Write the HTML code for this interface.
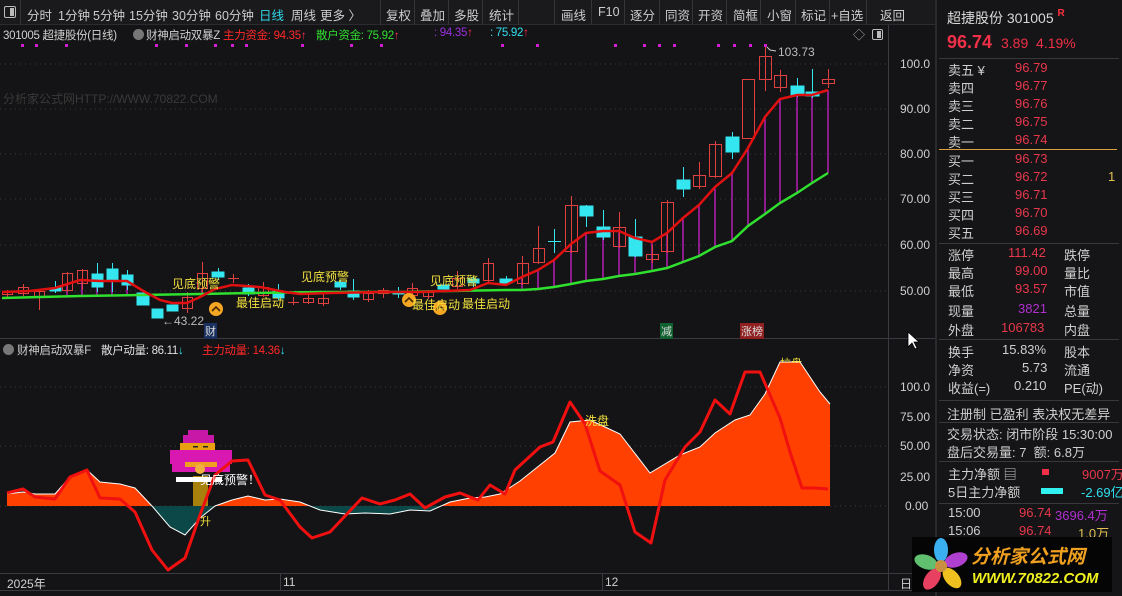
<!DOCTYPE html>
<html><head><meta charset="utf-8">
<style>
*{margin:0;padding:0;box-sizing:border-box}
body{width:1122px;height:596px;background:#141315;overflow:hidden;position:relative;font-family:"Liberation Sans","Noto Sans CJK SC",sans-serif;color:#cfcfcf;font-size:12px}
.a{position:absolute;white-space:nowrap}
.tb{position:absolute;top:0;left:0;width:935px;height:25px;background:#1a191c;border-bottom:1px solid #2c2c30}
.tb span{position:absolute;top:5px;font-size:12.5px;color:#cdcdcd}
.sep{position:absolute;top:0;width:1px;height:25px;background:#34343a}
.ip{position:absolute;left:935px;top:0;width:187px;height:596px;background:#151416;border-left:2px solid #2a2a2e;overflow:hidden}
.ip .a{font-size:13px}
.hl{position:absolute;left:2px;width:180px;height:1px;background:#38383c}
.r{color:#e8384c}
.tt{font-size:11.5px;letter-spacing:-0.3px}
</style></head><body>

<div class="tb">
<div style="position:absolute;left:4px;top:6px;width:12px;height:12px;border:1px solid #bbb;border-radius:2px"><div style="position:absolute;right:1px;top:1px;width:4px;height:8px;background:#bbb"></div></div>
<div class="sep" style="left:20px"></div>
<span style="left:27px">分时</span><span style="left:58px">1分钟</span><span style="left:93px">5分钟</span><span style="left:129px">15分钟</span><span style="left:172px">30分钟</span><span style="left:215px">60分钟</span><span style="left:259px;color:#2fd6e8">日线</span><span style="left:291px">周线</span><span style="left:320px">更多 〉</span>
<div class="sep" style="left:380px"></div><span style="left:386px">复权</span>
<div class="sep" style="left:414px"></div><span style="left:420px">叠加</span>
<div class="sep" style="left:448px"></div><span style="left:454px">多股</span>
<div class="sep" style="left:482px"></div><span style="left:489px">统计</span>
<div class="sep" style="left:518px"></div>
<div class="sep" style="left:554px"></div><span style="left:561px">画线</span>
<div class="sep" style="left:591px"></div><span style="left:598px">F10</span>
<div class="sep" style="left:624px"></div><span style="left:630px">逐分</span>
<div class="sep" style="left:659px"></div><span style="left:665px">同资</span>
<div class="sep" style="left:692px"></div><span style="left:698px">开资</span>
<div class="sep" style="left:726px"></div><span style="left:733px">简框</span>
<div class="sep" style="left:760px"></div><span style="left:767px">小窗</span>
<div class="sep" style="left:795px"></div><span style="left:801px">标记</span>
<div class="sep" style="left:829px"></div><span style="left:831px">+自选</span>
<div class="sep" style="left:866px"></div><span style="left:880px">返回</span>
</div>

<svg class="a" style="left:0;top:0" width="935" height="596" viewBox="0 0 935 596">
<g stroke="#3a3a3e" stroke-dasharray="1 4" stroke-width="1">
<line x1="0" y1="64" x2="888" y2="64"/><line x1="0" y1="109" x2="888" y2="109"/><line x1="0" y1="154" x2="888" y2="154"/><line x1="0" y1="199" x2="888" y2="199"/><line x1="0" y1="245" x2="888" y2="245"/><line x1="0" y1="291" x2="888" y2="291"/>
<line x1="0" y1="387" x2="888" y2="387"/><line x1="0" y1="446" x2="888" y2="446"/><line x1="0" y1="506" x2="888" y2="506"/>
</g>
<line x1="888.5" y1="25" x2="888.5" y2="590" stroke="#3a3a40"/>
<line x1="0" y1="338.5" x2="935" y2="338.5" stroke="#3a3a40"/>
<line x1="0" y1="573.5" x2="935" y2="573.5" stroke="#3a3a40"/>
<line x1="0" y1="590.5" x2="935" y2="590.5" stroke="#3a3a40"/>
<line x1="280.5" y1="574" x2="280.5" y2="590" stroke="#3a3a40"/>
<line x1="602.5" y1="574" x2="602.5" y2="590" stroke="#3a3a40"/>
<g fill="#d020d0"><rect x="21" y="44" width="3" height="3"/><rect x="35" y="44" width="3" height="3"/><rect x="65" y="44" width="3" height="3"/><rect x="155" y="44" width="3" height="3"/><rect x="185" y="44" width="3" height="3"/><rect x="214" y="44" width="3" height="3"/><rect x="231" y="44" width="3" height="3"/><rect x="245" y="44" width="3" height="3"/><rect x="301" y="44" width="3" height="3"/><rect x="350" y="44" width="3" height="3"/><rect x="380" y="44" width="3" height="3"/><rect x="501" y="44" width="3" height="3"/><rect x="536" y="44" width="3" height="3"/><rect x="614" y="44" width="3" height="3"/><rect x="643" y="44" width="3" height="3"/><rect x="658" y="44" width="3" height="3"/><rect x="673" y="44" width="3" height="3"/><rect x="717" y="44" width="3" height="3"/><rect x="733" y="44" width="3" height="3"/><rect x="749" y="44" width="3" height="3"/><rect x="764" y="44" width="3" height="3"/></g>
<g stroke="#cc22cc" stroke-width="1.3">
<line x1="522" y1="277" x2="522" y2="290"/><line x1="538" y1="270" x2="538" y2="289"/><line x1="554" y1="260" x2="554" y2="287"/><line x1="571" y1="244" x2="571" y2="284"/><line x1="586" y1="233" x2="586" y2="281"/><line x1="603" y1="231" x2="603" y2="279"/><line x1="619" y1="231" x2="619" y2="276"/><line x1="635" y1="238" x2="635" y2="274"/><line x1="652" y1="242" x2="652" y2="271"/><line x1="667" y1="233" x2="667" y2="268"/><line x1="683" y1="218" x2="683" y2="262"/><line x1="699" y1="205" x2="699" y2="256"/><line x1="715" y1="187" x2="715" y2="247"/><line x1="732" y1="173" x2="732" y2="241"/><line x1="748" y1="148" x2="748" y2="226"/><line x1="765" y1="117" x2="765" y2="214"/><line x1="780" y1="99" x2="780" y2="203"/><line x1="797" y1="95" x2="797" y2="193"/><line x1="812" y1="95" x2="812" y2="183"/><line x1="828" y1="90" x2="828" y2="173"/>
<line x1="67" y1="285" x2="67" y2="297"/><line x1="82" y1="281" x2="82" y2="297"/><line x1="97" y1="281" x2="97" y2="296"/><line x1="112" y1="281" x2="112" y2="296"/><line x1="127" y1="281" x2="127" y2="295"/><line x1="202" y1="290" x2="202" y2="296"/>
</g>
<g stroke="#e0403f" fill="none" stroke-width="1">
<line x1="7.5" y1="290" x2="7.5" y2="297"/><rect x="2.5" y="291.5" width="10" height="3"/>
<line x1="23.5" y1="284" x2="23.5" y2="296"/><rect x="18.5" y="287.5" width="10" height="6"/>
<line x1="39.5" y1="289" x2="39.5" y2="310"/><rect x="34.5" y="291.5" width="10" height="5"/>
<line x1="67.5" y1="272" x2="67.5" y2="292"/><rect x="62.5" y="273.5" width="10" height="17"/>
<line x1="82.5" y1="269" x2="82.5" y2="290"/><rect x="77.5" y="270.5" width="10" height="13"/>
<line x1="187.5" y1="292" x2="187.5" y2="313"/><rect x="182.5" y="297.5" width="10" height="11"/>
<line x1="202.5" y1="262" x2="202.5" y2="293"/><rect x="197.5" y="273.5" width="10" height="15"/>
<line x1="233.5" y1="274" x2="233.5" y2="283"/><line x1="228" y1="278.5" x2="239" y2="278.5"/>
<line x1="263.5" y1="282" x2="263.5" y2="297"/><rect x="258.5" y="287.5" width="10" height="8"/>
<line x1="293.5" y1="297" x2="293.5" y2="305"/><line x1="288" y1="302.5" x2="299" y2="302.5"/>
<line x1="308.5" y1="294" x2="308.5" y2="304"/><rect x="303.5" y="298.5" width="10" height="4"/>
<line x1="323.5" y1="293" x2="323.5" y2="306"/><rect x="318.5" y="298.5" width="10" height="5"/>
<line x1="368.5" y1="290" x2="368.5" y2="302"/><rect x="363.5" y="293.5" width="10" height="6"/>
<line x1="383.5" y1="288" x2="383.5" y2="298"/><rect x="378.5" y="290.5" width="10" height="3"/>
<line x1="412.5" y1="283" x2="412.5" y2="298"/><rect x="407.5" y="288.5" width="10" height="7"/>
<line x1="428.5" y1="290" x2="428.5" y2="299"/><rect x="423.5" y="292.5" width="10" height="4"/>
<line x1="457.5" y1="271" x2="457.5" y2="289"/><rect x="452.5" y="278.5" width="10" height="8"/>
<line x1="488.5" y1="258" x2="488.5" y2="283"/><rect x="483.5" y="263.5" width="10" height="17"/>
<line x1="522.5" y1="256" x2="522.5" y2="285"/><rect x="517.5" y="263.5" width="11" height="20"/>
<line x1="538.5" y1="226" x2="538.5" y2="264"/><rect x="533.5" y="248.5" width="11" height="14"/>
<line x1="571.5" y1="196" x2="571.5" y2="253"/><rect x="565.5" y="205.5" width="12" height="46"/>
<line x1="619.5" y1="212" x2="619.5" y2="248"/><rect x="613.5" y="227.5" width="12" height="19"/>
<line x1="652.5" y1="245" x2="652.5" y2="263"/><rect x="646.5" y="254.5" width="12" height="5"/>
<line x1="667.5" y1="200" x2="667.5" y2="253"/><rect x="661.5" y="202.5" width="12" height="49"/>
<line x1="699.5" y1="162" x2="699.5" y2="189"/><rect x="693.5" y="175.5" width="12" height="11"/>
<line x1="715.5" y1="141" x2="715.5" y2="178"/><rect x="709.5" y="144.5" width="12" height="32"/>
<rect x="742.5" y="79.5" width="12" height="59"/>
<line x1="765.5" y1="47" x2="765.5" y2="91"/><rect x="759.5" y="56.5" width="12" height="23"/>
<line x1="780.5" y1="70" x2="780.5" y2="92"/><rect x="774.5" y="75.5" width="12" height="12"/>
<line x1="828.5" y1="69" x2="828.5" y2="88"/><rect x="822.5" y="79.5" width="12" height="4"/>
</g>
<g stroke="#33e6f0" fill="#33e6f0">
<line x1="55.5" y1="281" x2="55.5" y2="293"/><rect x="50" y="288" width="11" height="3"/>
<line x1="97.5" y1="263" x2="97.5" y2="292"/><rect x="92" y="274" width="11" height="13"/>
<line x1="112.5" y1="263" x2="112.5" y2="292"/><rect x="107" y="269" width="11" height="11"/>
<line x1="127.5" y1="270" x2="127.5" y2="290"/><rect x="122" y="275" width="11" height="10"/>
<rect x="137" y="293" width="12" height="12"/>
<rect x="152" y="309" width="11" height="9"/>
<rect x="167" y="305" width="11" height="6"/>
<rect x="212" y="272" width="12" height="5"/><line x1="218.5" y1="268" x2="218.5" y2="280"/>
<line x1="248.5" y1="284" x2="248.5" y2="296"/><rect x="243" y="288" width="11" height="6"/>
<line x1="278.5" y1="284" x2="278.5" y2="300"/><rect x="273" y="291" width="11" height="7"/>
<line x1="340.5" y1="280" x2="340.5" y2="290"/><rect x="335" y="282" width="11" height="5"/>
<line x1="353.5" y1="279" x2="353.5" y2="300"/><rect x="348" y="291" width="11" height="6"/>
<line x1="398.5" y1="287" x2="398.5" y2="298"/><rect x="393" y="292" width="11" height="2"/>
<rect x="438" y="285" width="11" height="4"/>
<line x1="473.5" y1="276" x2="473.5" y2="287"/><rect x="468" y="279" width="11" height="4"/>
<line x1="506.5" y1="276" x2="506.5" y2="285"/><rect x="500" y="279" width="12" height="4"/>
<line x1="554.5" y1="229" x2="554.5" y2="253"/><line x1="548" y1="241.5" x2="561" y2="241.5"/>
<line x1="586.5" y1="205" x2="586.5" y2="227"/><rect x="580" y="206" width="13" height="10"/>
<line x1="603.5" y1="210" x2="603.5" y2="240"/><rect x="597" y="227" width="13" height="10"/>
<line x1="635.5" y1="219" x2="635.5" y2="257"/><rect x="629" y="237" width="13" height="19"/>
<line x1="683.5" y1="167" x2="683.5" y2="197"/><rect x="677" y="180" width="13" height="9"/>
<line x1="732.5" y1="132" x2="732.5" y2="159"/><rect x="726" y="137" width="13" height="15"/>
<line x1="797.5" y1="78" x2="797.5" y2="97"/><rect x="791" y="86" width="13" height="9"/>
<line x1="812.5" y1="69" x2="812.5" y2="98"/><rect x="806" y="92" width="13" height="4"/>
</g>
<polyline fill="none" stroke="#2fe02f" stroke-width="2.5" points="2,298 40,297 80,296 140,295 200,294 250,293 320,292 400,292 450,291 506,290 522,290 538,289 554,287 571,284 586,281 603,279 619,276 635,274 652,271 667,268 683,262 699,256 715,247 732,241 748,226 765,214 780,203 797,193 812,183 828,173"/>
<polyline fill="none" stroke="#e01010" stroke-width="2.5" points="2,292 30,291 55,288 80,280 100,281 127,281 145,292 160,300 172,303 187,303 200,297 215,289 232,285 260,287 285,292 300,294 330,293 380,292 420,292 470,290 488,283 506,285 522,277 538,270 554,260 571,244 586,233 603,231 619,231 635,238 652,242 667,233 683,218 699,205 715,187 732,173 748,148 765,117 780,99 797,95 812,95 828,90"/>
<defs>
<clipPath id="up"><rect x="0" y="340" width="888" height="166"/></clipPath>
<clipPath id="dn"><rect x="0" y="506" width="888" height="66"/></clipPath>
</defs>
<polygon clip-path="url(#up)" fill="#ff4000" points="7,506 7,494 23,492 35,494 55,494 70,477 87,470 100,482 120,484 135,488 152,506 170,527 185,535 200,518 215,506 232,500 248,496 265,500 280,499 300,502 320,510 345,514 365,513 390,514 410,510 430,511 450,502 470,498 485,497 500,494 520,481 540,465 555,453 570,422 590,420 605,427 620,434 650,473 680,455 700,447 715,433 735,420 750,415 765,394 780,362 800,362 820,392 830,404 830,506"/>
<polygon clip-path="url(#dn)" fill="#0c4848" points="7,506 7,494 23,492 35,494 55,494 70,477 87,470 100,482 120,484 135,488 152,506 170,527 185,535 200,518 215,506 232,500 248,496 265,500 280,499 300,502 320,510 345,514 365,513 390,514 410,510 430,511 450,502 470,498 485,497 500,494 520,481 540,465 555,453 570,422 590,420 605,427 620,434 650,473 680,455 700,447 715,433 735,420 750,415 765,394 780,362 800,362 820,392 830,404 830,506"/>
<polyline fill="none" stroke="#fff" stroke-width="1" points="7,494 23,492 35,494 55,494 70,477 87,470 100,482 120,484 135,488 152,506 170,527 185,535 200,518 215,506 232,500 248,496 265,500 280,499 300,502 320,510 345,514 365,513 390,514 410,510 430,511 450,502 470,498 485,497 500,494 520,481 540,465 555,453 570,422 590,420 605,427 620,434 650,473 680,455 700,447 715,433 735,420 750,415 765,394 780,362 800,362 820,392 830,404"/>
<rect x="188" y="430" width="20" height="5" fill="#c818a8"/>
<rect x="183" y="435" width="31" height="8" fill="#c818a8"/>
<rect x="180" y="443" width="35" height="7" fill="#e8a010"/>
<rect x="193" y="446" width="5" height="1.5" fill="#222"/><rect x="203" y="446" width="5" height="1.5" fill="#222"/><rect x="197" y="450" width="6" height="4" fill="#111"/>
<rect x="170" y="450" width="62" height="14" fill="#d818b0"/>
<rect x="172" y="464" width="58" height="8" fill="#d818b0"/>
<rect x="185" y="462" width="32" height="5" fill="#f0a020"/>
<circle cx="200" cy="469" r="5" fill="#f0b040"/>
<rect x="193" y="476" width="15" height="30" fill="#a8800c"/>
<rect x="176" y="477" width="46" height="5" fill="#fff"/>
<polyline fill="none" stroke="#f01010" stroke-width="3" stroke-linejoin="round" points="7,493 23,489 35,497 55,499 70,477 87,470 100,498 120,499 135,512 152,550 168,570 185,558 200,515 215,475 232,461 248,460 265,495 280,500 300,527 312,538 330,532 362,498 380,504 395,500 410,494 425,508 445,497 460,493 470,497 478,500 490,485 505,494 515,470 540,447 553,442 570,402 585,424 600,471 620,485 635,532 651,543 665,480 685,447 700,432 715,400 730,414 745,372 760,372 780,418 790,452 802,488 815,488 828,489"/>
<g><circle cx="216" cy="309" r="7" fill="#f5a623"/><circle cx="409" cy="300" r="7" fill="#f5a623"/><circle cx="440" cy="308" r="7" fill="#f5a623"/></g>
<g stroke="#4a2a00" stroke-width="1.6" fill="none"><polyline points="212,311 216,307 220,311"/><polyline points="405,302 409,298 413,302"/><polyline points="436,310 440,306 444,310"/></g>
<polyline points="767,47 770,50 776,51" stroke="#ccc" fill="none"/>
<path d="M908 332 L908 347 L912 343 L915 349 L917 348 L914 342 L919 342 Z" fill="#fff" stroke="#000" stroke-width="0.8"/>
</svg>

<div class="a tt" style="left:3px;top:27px;color:#d0d0d0">301005 超捷股份(日线)</div>
<div class="a" style="left:133px;top:29px;width:11px;height:11px;border-radius:50%;background:#777"></div>
<div class="a tt" style="left:146px;top:27px;color:#d0d0d0">财神启动双暴Z</div>
<div class="a tt" style="left:223px;top:27px;color:#ff2828">主力资金: 94.35<span style="color:#ff3050">↑</span></div>
<div class="a tt" style="left:316px;top:27px;color:#30e030">散户资金: 75.92<span style="color:#ff3050">↑</span></div>
<div class="a tt" style="left:434px;top:27px;color:#9a30e0">: 94.35<span style="color:#ff3050">↑</span></div>
<div class="a tt" style="left:490px;top:27px;color:#30e0f0">: 75.92<span style="color:#ff3050">↑</span></div>
<div class="a" style="left:853px;top:26px;color:#aaa;font-size:12px">◇</div>
<div class="a" style="left:872px;top:29px;width:11px;height:11px;border:1px solid #bbb;border-radius:2px"><div style="position:absolute;right:1px;top:1px;width:4px;height:7px;background:#bbb"></div></div>
<div class="a" style="left:3px;top:90px;color:#3a3a3a;font-size:12px">分析家公式网HTTP://WWW.70822.COM</div>

<div class="a" style="left:172px;top:275px;color:#f0e040">见底预警</div>
<div class="a" style="left:301px;top:268px;color:#f0e040">见底预警</div>
<div class="a" style="left:430px;top:272px;color:#f0e040">见底预警</div>
<div class="a" style="left:236px;top:294px;color:#f0e040">最佳启动</div>
<div class="a" style="left:412px;top:296px;color:#f0e040">最佳启动</div>
<div class="a" style="left:462px;top:295px;color:#f0e040">最佳启动</div>
<div class="a" style="left:162px;top:314px;color:#bbb">←43.22</div>
<div class="a" style="left:204px;top:323px;background:#1a3060;color:#ddd;font-size:11px;padding:0 1px">财</div>
<div class="a" style="left:660px;top:323px;background:#106030;color:#ddd;font-size:11px;padding:0 1px">减</div>
<div class="a" style="left:740px;top:323px;background:#902020;color:#ddd;font-size:11px;padding:0 1px">涨榜</div>
<div class="a" style="left:778px;top:45px;color:#bbb">103.73</div>

<div class="a" style="left:900px;top:57px">100.0</div>
<div class="a" style="left:900px;top:102px">90.00</div>
<div class="a" style="left:900px;top:147px">80.00</div>
<div class="a" style="left:900px;top:192px">70.00</div>
<div class="a" style="left:900px;top:238px">60.00</div>
<div class="a" style="left:900px;top:284px">50.00</div>
<div class="a" style="left:900px;top:380px">100.0</div>
<div class="a" style="left:900px;top:410px">75.00</div>
<div class="a" style="left:900px;top:439px">50.00</div>
<div class="a" style="left:900px;top:470px">25.00</div>
<div class="a" style="left:905px;top:499px">0.00</div>

<div class="a" style="left:3px;top:344px;width:11px;height:11px;border-radius:50%;background:#777"></div>
<div class="a tt" style="left:17px;top:342px;color:#d0d0d0">财神启动双暴F</div>
<div class="a tt" style="left:101px;top:342px;color:#e0e0e0">散户动量: 86.11<span style="color:#30e0f0">↓</span></div>
<div class="a tt" style="left:202px;top:342px;color:#ff2828">主力动量: 14.36<span style="color:#30e0f0">↓</span></div>
<div class="a" style="left:585px;top:412px;color:#f0e040">洗盘</div>
<div class="a" style="left:780px;top:355px;color:#f0e040;font-size:11px;height:8px;overflow:hidden">拉盘</div>
<div class="a" style="left:200px;top:471px;color:#fff;font-size:12px">见底预警！</div>
<div class="a" style="left:200px;top:513px;color:#f0e040;font-size:11px">升</div>

<div class="a" style="left:7px;top:575px;color:#d0d0d0">2025年</div>
<div class="a" style="left:283px;top:575px;color:#d0d0d0">11</div>
<div class="a" style="left:605px;top:575px;color:#d0d0d0">12</div>
<div class="a" style="left:900px;top:575px;color:#d0d0d0">日</div>

<div class="ip">
<div class="a" style="left:10px;top:8px;font-size:14px;color:#d8d8d8">超捷股份 301005 <span style="color:#ff3040;font-size:10px;font-weight:bold;vertical-align:top">R</span></div>
<div class="a" style="left:10px;top:32px;font-size:18px;font-weight:bold;color:#f03048">96.74</div>
<div class="a" style="left:64px;top:35px;font-size:14px;color:#f03048">3.89&nbsp;&nbsp;4.19%</div>
<div class="hl" style="top:58px"></div>
<div class="a" style="left:11px;top:60px">卖五 ¥</div><div class="a r" style="left:78px;top:60px">96.79</div>
<div class="a" style="left:11px;top:78px">卖四</div><div class="a r" style="left:78px;top:78px">96.77</div>
<div class="a" style="left:11px;top:96px">卖三</div><div class="a r" style="left:78px;top:96px">96.76</div>
<div class="a" style="left:11px;top:114px">卖二</div><div class="a r" style="left:78px;top:114px">96.75</div>
<div class="a" style="left:11px;top:132px">卖一</div><div class="a r" style="left:78px;top:132px">96.74</div>
<div style="position:absolute;left:2px;top:149px;width:178px;height:1px;background:#d8a040"></div>
<div class="a" style="left:11px;top:151px">买一</div><div class="a r" style="left:78px;top:151px">96.73</div>
<div class="a" style="left:11px;top:169px">买二</div><div class="a r" style="left:78px;top:169px">96.72</div><div class="a" style="left:171px;top:169px;color:#e0c050">1</div>
<div class="a" style="left:11px;top:187px">买三</div><div class="a r" style="left:78px;top:187px">96.71</div>
<div class="a" style="left:11px;top:205px">买四</div><div class="a r" style="left:78px;top:205px">96.70</div>
<div class="a" style="left:11px;top:223px">买五</div><div class="a r" style="left:78px;top:223px">96.69</div>
<div class="hl" style="top:243px"></div>
<div class="a" style="left:11px;top:245px">涨停</div><div class="a r" style="left:71px;top:245px">111.42</div><div class="a" style="left:127px;top:245px">跌停</div>
<div class="a" style="left:11px;top:263px">最高</div><div class="a r" style="left:78px;top:263px">99.00</div><div class="a" style="left:127px;top:263px">量比</div>
<div class="a" style="left:11px;top:281px">最低</div><div class="a r" style="left:78px;top:281px">93.57</div><div class="a" style="left:127px;top:281px">市值</div>
<div class="a" style="left:11px;top:301px">现量</div><div class="a" style="left:81px;top:301px;color:#b030d0">3821</div><div class="a" style="left:127px;top:301px">总量</div>
<div class="a" style="left:11px;top:320px">外盘</div><div class="a r" style="left:64px;top:320px">106783</div><div class="a" style="left:127px;top:320px">内盘</div>
<div class="hl" style="top:339px"></div>
<div class="a" style="left:11px;top:342px">换手</div><div class="a" style="left:65px;top:342px">15.83%</div><div class="a" style="left:127px;top:342px">股本</div>
<div class="a" style="left:11px;top:360px">净资</div><div class="a" style="left:85px;top:360px">5.73</div><div class="a" style="left:127px;top:360px">流通</div>
<div class="a" style="left:11px;top:378px">收益(=)</div><div class="a" style="left:77px;top:378px">0.210</div><div class="a" style="left:127px;top:378px">PE(动)</div>
<div class="hl" style="top:400px"></div>
<div class="a" style="left:10px;top:404px">注册制 已盈利 表决权无差异</div>
<div class="hl" style="top:422px"></div>
<div class="a" style="left:10px;top:424px">交易状态: 闭市阶段 15:30:00</div>
<div class="a" style="left:10px;top:442px">盘后交易量: 7&nbsp;&nbsp;额: 6.8万</div>
<div class="hl" style="top:461px"></div>
<div class="a" style="left:11px;top:464px">主力净额 ▤</div><div style="position:absolute;left:105px;top:469px;width:7px;height:6px;background:#f03048"></div><div class="a r" style="left:145px;top:464px">9007万</div>
<div class="a" style="left:11px;top:482px">5日主力净额</div><div style="position:absolute;left:104px;top:488px;width:22px;height:6px;background:#30f0f0"></div><div class="a" style="left:144px;top:482px;color:#30e0f0">-2.69亿</div>
<div class="hl" style="top:503px"></div>
<div class="a" style="left:11px;top:505px">15:00</div><div class="a r" style="left:82px;top:505px">96.74</div><div class="a" style="left:118px;top:505px;color:#b030d0">3696.4万</div>
<div class="a" style="left:11px;top:523px">15:06</div><div class="a r" style="left:82px;top:523px">96.74</div><div class="a" style="left:141px;top:523px;color:#e0c050">1.0万</div>
</div>

<div class="a" style="left:912px;top:537px;width:200px;height:55px;background:#050505;overflow:hidden">
<svg class="a" style="left:2px;top:1px" width="54" height="54" viewBox="0 0 54 54">
<ellipse cx="27" cy="12" rx="7" ry="12" fill="#3ab0f0"/>
<ellipse cx="42" cy="22" rx="7" ry="12" transform="rotate(70 42 22)" fill="#b040d0"/>
<ellipse cx="38" cy="40" rx="7" ry="12" transform="rotate(-40 38 40)" fill="#f0c020"/>
<ellipse cx="18" cy="41" rx="7" ry="12" transform="rotate(35 18 41)" fill="#e84060"/>
<ellipse cx="12" cy="24" rx="7" ry="12" transform="rotate(-70 12 24)" fill="#60c070"/>
<circle cx="27" cy="28" r="6" fill="#c89040"/>
</svg>
<div class="a" style="left:59px;top:5px;font-size:19px;font-weight:bold;font-style:italic;color:#f0a020">分析家公式网</div>
<div class="a" style="left:60px;top:33px;font-size:15px;font-weight:bold;font-style:italic;color:#f0f020">WWW.70822.COM</div>
</div>
</body></html>
